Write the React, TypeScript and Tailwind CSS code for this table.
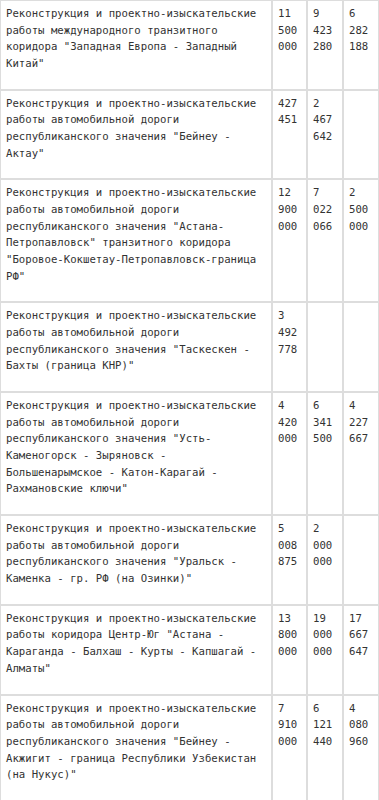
type Row = {
  name: string;
  values: string[];
};

const rows: Row[] = [
  {
    name: 'Реконструкция и проектно-изыскательские работы международного транзитного коридора "Западная Европа - Западный Китай"',
    values: ['11 500 000', '9 423 280', '6 282 188'],
  },
  {
    name: 'Реконструкция и проектно-изыскательские работы автомобильной дороги республиканского значения "Бейнеу - Актау"',
    values: ['427 451', '2 467 642', ''],
  },
  {
    name: 'Реконструкция и проектно-изыскательские работы автомобильной дороги республиканского значения "Астана-Петропавловск" транзитного коридора "Боровое-Кокшетау-Петропавловск-граница РФ"',
    values: ['12 900 000', '7 022 066', '2 500 000'],
  },
  {
    name: 'Реконструкция и проектно-изыскательские работы автомобильной дороги республиканского значения "Таскескен - Бахты (граница КНР)"',
    values: ['3 492 778', '', ''],
  },
  {
    name: 'Реконструкция и проектно-изыскательские работы автомобильной дороги республиканского значения "Усть-Каменогорск - Зыряновск - Большенарымское - Катон-Карагай - Рахмановские ключи"',
    values: ['4 420 000', '6 341 500', '4 227 667'],
  },
  {
    name: 'Реконструкция и проектно-изыскательские работы автомобильной дороги республиканского значения "Уральск - Каменка - гр. РФ (на Озинки)"',
    values: ['5 008 875', '2 000 000', ''],
  },
  {
    name: 'Реконструкция и проектно-изыскательские работы коридора Центр-Юг "Астана - Караганда - Балхаш - Курты - Капшагай - Алматы"',
    values: ['13 800 000', '19 000 000', '17 667 647'],
  },
  {
    name: 'Реконструкция и проектно-изыскательские работы автомобильной дороги республиканского значения "Бейнеу - Акжигит - граница Республики Узбекистан (на Нукус)"',
    values: ['7 910 000', '6 121 440', '4 080 960'],
  },
];

const cell = 'border border-[#dddddd] align-top px-[5px] pt-[5px] pb-4';

export default function App() {
  return (
    <div className="w-[379px] bg-white text-[#333333] font-['DejaVu_Sans_Mono',monospace] text-[10.67px] leading-[16.67px]">
      <table className="w-[379px] table-fixed border-separate border-spacing-0">
        <colgroup>
          <col className="w-[272px]" />
          <col className="w-[35px]" />
          <col className="w-[36px]" />
          <col className="w-[36px]" />
        </colgroup>
        <tbody>
          {rows.map((row, i) => (
            <tr key={i}>
              <td className={cell}>{row.name}</td>
              {row.values.map((v, j) => (
                <td key={j} className={cell}>
                  {v}
                </td>
              ))}
            </tr>
          ))}
        </tbody>
      </table>
    </div>
  );
}
